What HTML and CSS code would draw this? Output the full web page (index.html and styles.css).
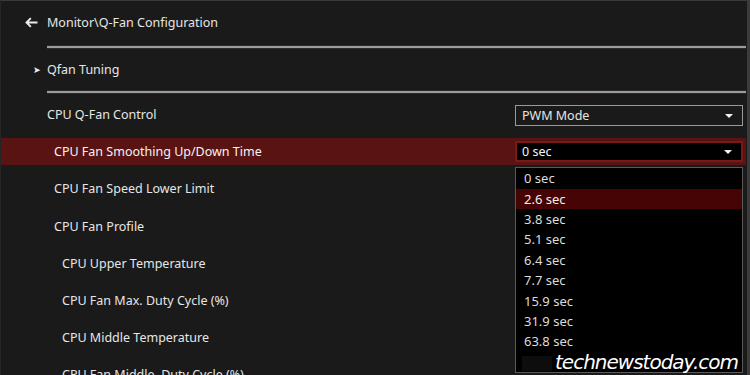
FILE: index.html
```html
<!DOCTYPE html>
<html lang="en">
<head>
  <meta charset="UTF-8">
  <meta name="viewport" content="width=device-width, initial-scale=1.0">
  <title>Monitor\Q-Fan Configuration</title>
  <link rel="stylesheet" href="styles.css">
</head>
<body>

  <div class="screen">
    <div class="title">
      <svg class="back" width="13" height="11" viewBox="0 0 13 11">
        <path d="M12.5 5.5H1.8M5.8 1.2L1.5 5.5l4.3 4.3" fill="none" stroke="#ececec" stroke-width="1.9"/>
      </svg>
      <span>Monitor\Q-Fan Configuration</span>
    </div>
    <div class="divider"></div>

    <div class="submenu">
      <span class="pointer">&#10148;</span>
      <span>Qfan Tuning</span>
    </div>
    <div class="divider"></div>

    <ul class="rows">
      <li class="row">
        <span class="label">CPU Q-Fan Control</span>
        <div class="select"><span>PWM Mode</span><i class="caret"></i></div>
      </li>
      <li class="row sub active">
        <span class="label">CPU Fan Smoothing Up/Down Time</span>
        <div class="select open">
          <span>0 sec</span><i class="caret"></i>
          <ul class="options">
            <li>0 sec</li>
            <li class="hover">2.6 sec</li>
            <li>3.8 sec</li>
            <li>5.1 sec</li>
            <li>6.4 sec</li>
            <li>7.7 sec</li>
            <li>15.9 sec</li>
            <li>31.9 sec</li>
            <li>63.8 sec</li>
            <li>&nbsp;</li>
          </ul>
        </div>
      </li>
      <li class="row sub"><span class="label">CPU Fan Speed Lower Limit</span></li>
      <li class="row sub"><span class="label">CPU Fan Profile</span></li>
      <li class="row sub2"><span class="label">CPU Upper Temperature</span></li>
      <li class="row sub2"><span class="label">CPU Fan Max. Duty Cycle (%)</span></li>
      <li class="row sub2"><span class="label">CPU Middle Temperature</span></li>
      <li class="row sub2"><span class="label">CPU Fan Middle. Duty Cycle (%)</span></li>
    </ul>

    <div class="smudge"></div>
    <div class="watermark">technewstoday.com</div>
  </div>

</body>
</html>
```

FILE: styles.css
```css
body {
  margin: 0;
  background-color: #1a1a1a;
  font-family: "Noto Sans", "Open Sans", sans-serif;
  font-size: 12.5px;
  color: #e6e6e6;
  overflow: hidden;
}
.screen {
  position: relative;
  width: 750px;
  height: 375px;
  box-sizing: border-box;
  border-top: 1px solid #3a3a3a;
  border-left: 1px solid #262626;
  border-right: 3px solid #3b3b3b;
  padding-right: 1px;
  background: #1a1a1a;
  overflow: hidden;
}
.title {
  height: 45px;
  display: flex;
  align-items: center;
  padding-left: 24px;
  padding-bottom: 3px;
  box-sizing: border-box;
}
.back {
  margin-right: 9px;
}
.divider {
  height: 2px;
  margin-left: 46px;
  background: #9c9c9c;
  box-shadow: 0 -1px 0 #2a2a2a, 0 1px 0 #2a2a2a;
}
.submenu {
  height: 43px;
  display: flex;
  align-items: center;
  padding-left: 32px;
  padding-bottom: 1px;
  box-sizing: border-box;
}
.pointer {
  font-size: 9px;
  width: 14px;
  color: #f0f0f0;
}
.rows {
  list-style: none;
  margin: 0;
  padding: 8px 0 0 0;
}
.row {
  position: relative;
  height: 27px;
  margin-bottom: 10.2px;
  display: flex;
  align-items: center;
  padding-left: 46px;
  padding-right: 3px;
}
.row.sub {
  padding-left: 53px;
}
.row.sub2 {
  padding-left: 61px;
}
.row.active {
  background: #5a1313;
  color: #f4f4f4;
}
.label {
  flex: 1;
}
.select {
  position: relative;
  width: 228px;
  height: 21px;
  box-sizing: border-box;
  border: 1px solid #9a9a9a;
  display: flex;
  align-items: center;
  padding-left: 6px;
  padding-right: 9px;
  margin-top: 2px;
}
.select span {
  flex: 1;
}
.row.active .select {
  border: 2px solid #7c1818;
  background: #000;
  padding-left: 5px;
  margin-top: 0;
}
.caret {
  width: 0;
  height: 0;
  border-left: 4px solid transparent;
  border-right: 4px solid transparent;
  border-top: 4px solid #f2f2f2;
}
.options {
  position: absolute;
  top: 24px;
  left: -2px;
  width: 228px;
  box-sizing: border-box;
  list-style: none;
  margin: 0;
  padding: 0;
  background: #000;
  border: 1px solid #5a5a5a;
  color: #dcdcdc;
  font-size: 13px;
  z-index: 2;
}
.options li {
  height: 20.4px;
  line-height: 20.4px;
  padding-left: 8px;
}
.options li.hover {
  background: #470404;
  color: #f0f0f0;
}
.smudge {
  position: absolute;
  left: 521px;
  top: 355px;
  width: 30px;
  height: 15px;
  background: #0d0d0d;
  z-index: 3;
}
.watermark {
  position: absolute;
  left: 554px;
  top: 349px;
  font-family: "DejaVu Sans", sans-serif;
  font-style: italic;
  font-size: 20px;
  letter-spacing: -1px;
  line-height: 24px;
  color: #ffffff;
  z-index: 3;
}
```
